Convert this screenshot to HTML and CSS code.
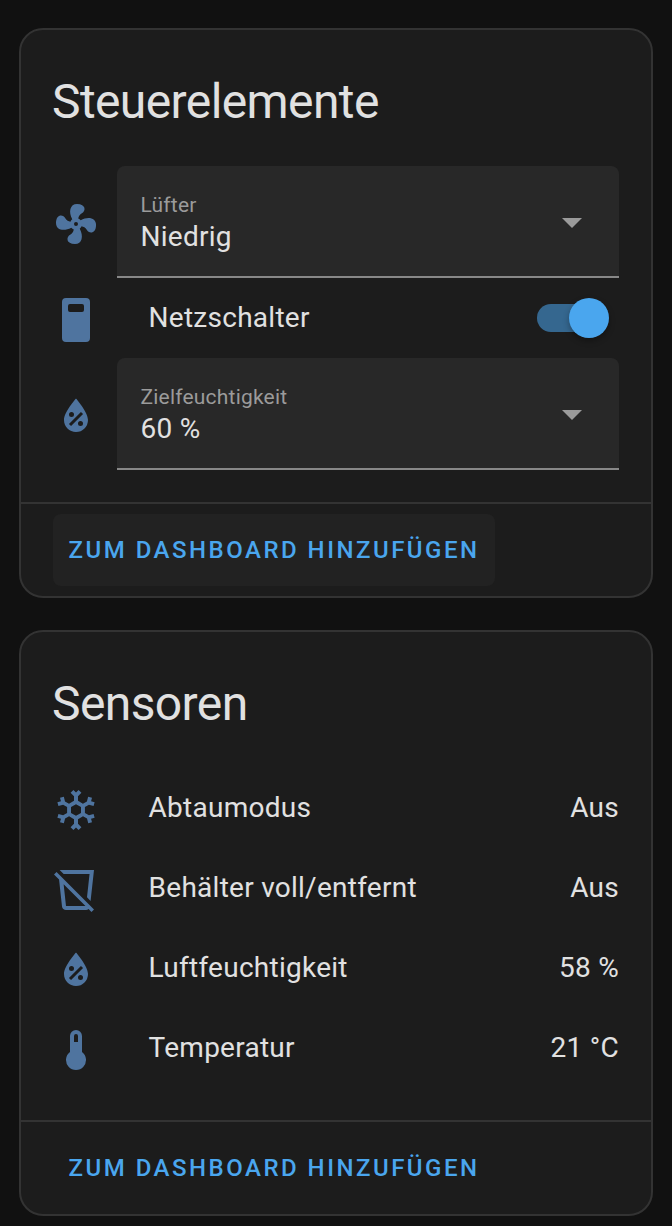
FILE: index.html
```html
<!DOCTYPE html>
<html lang="de">
<head>
<meta charset="utf-8">
<title>Luftentfeuchter</title>
<link rel="stylesheet" href="styles.css">
</head>
<body>
<main class="page">
  <section class="card">
    <h1 class="card-title">Steuerelemente</h1>
    <div class="rows">
      <div class="row row-select">
        <svg class="icon" viewBox="0 0 24 24"><path d="M12,11A1,1 0 0,0 11,12A1,1 0 0,0 12,13A1,1 0 0,0 13,12A1,1 0 0,0 12,11M12.5,2C17,2 17.11,5.57 14.75,6.75C13.76,7.24 13.32,8.29 13.13,9.22C13.61,9.42 14.03,9.73 14.35,10.13C18.05,8.13 22.03,8.92 22.03,12.5C22.03,17 18.46,17.1 17.28,14.73C16.78,13.74 15.72,13.3 14.79,13.11C14.59,13.59 14.28,14 13.88,14.34C15.87,18.03 15.08,22 11.5,22C7,22 6.91,18.42 9.27,17.24C10.25,16.75 10.69,15.71 10.89,14.79C10.4,14.59 9.97,14.27 9.65,13.87C5.96,15.85 2,15.07 2,11.5C2,7 5.56,6.89 6.74,9.26C7.24,10.25 8.29,10.68 9.22,10.87C9.41,10.39 9.73,9.97 10.14,9.65C8.15,5.96 8.94,2 12.5,2Z"/></svg>
        <div class="select">
          <div class="select-text">
            <span class="select-label">Lüfter</span>
            <span class="select-value">Niedrig</span>
          </div>
          <svg class="arrow" viewBox="0 0 20 10"><path d="M0 0H20L10 10Z"/></svg>
        </div>
      </div>
      <div class="row">
        <svg class="icon" viewBox="0 0 24 24"><path fill-rule="evenodd" d="M7 1H17A2 2 0 0 1 19 3V21A2 2 0 0 1 17 23H7A2 2 0 0 1 5 21V3A2 2 0 0 1 7 1ZM9 4A1 1 0 0 0 8 5V7A1 1 0 0 0 9 8H15A1 1 0 0 0 16 7V5A1 1 0 0 0 15 4Z"/></svg>
        <span class="name">Netzschalter</span>
        <div class="switch"><div class="thumb"></div></div>
      </div>
      <div class="row row-select">
        <svg class="icon" viewBox="0 0 24 24"><path d="M12,3.25C12,3.25 6,10 6,14C6,17.32 8.69,20 12,20A6,6 0 0,0 18,14C18,10 12,3.25 12,3.25M14.47,9.97L15.53,11.03L9.53,17.03L8.47,15.97M9.75,10A1.25,1.25 0 0,1 11,11.25A1.25,1.25 0 0,1 9.75,12.5A1.25,1.25 0 0,1 8.5,11.25A1.25,1.25 0 0,1 9.75,10M14.25,14.5A1.25,1.25 0 0,1 15.5,15.75A1.25,1.25 0 0,1 14.25,17A1.25,1.25 0 0,1 13,15.75A1.25,1.25 0 0,1 14.25,14.5Z"/></svg>
        <div class="select">
          <div class="select-text">
            <span class="select-label">Zielfeuchtigkeit</span>
            <span class="select-value">60 %</span>
          </div>
          <svg class="arrow" viewBox="0 0 20 10"><path d="M0 0H20L10 10Z"/></svg>
        </div>
      </div>
    </div>
    <div class="actions"><button class="button hovered">ZUM DASHBOARD HINZUFÜGEN</button></div>
  </section>

  <section class="card">
    <h1 class="card-title">Sensoren</h1>
    <div class="rows">
      <div class="row">
        <svg class="icon" viewBox="0 0 24 24"><path d="M20.79,13.95L18.46,14.57L16.46,13.44V10.56L18.46,9.43L20.79,10.05L21.31,8.12L19.54,7.65L20,5.88L18.07,5.36L17.45,7.69L15.45,8.82L13,7.38V5.12L14.71,3.41L13.29,2L12,3.29L10.71,2L9.29,3.41L11,5.12V7.38L8.5,8.82L6.5,7.69L5.92,5.36L4,5.88L4.47,7.65L2.7,8.12L3.22,10.05L5.55,9.43L7.55,10.56V13.45L5.55,14.58L3.22,13.96L2.7,15.89L4.47,16.36L4,18.12L5.93,18.64L6.55,16.31L8.55,15.18L11,16.62V18.88L9.29,20.59L10.71,22L12,20.71L13.29,22L14.7,20.59L13,18.88V16.62L15.5,15.17L17.5,16.3L18.12,18.63L20,18.12L19.53,16.35L21.3,15.88L20.79,13.95M9.5,10.56L12,9.11L14.5,10.56V13.44L12,14.89L9.5,13.44V10.56Z"/></svg>
        <span class="name">Abtaumodus</span>
        <span class="state">Aus</span>
      </div>
      <div class="row">
        <svg class="icon" viewBox="0 0 24 24"><path d="M1 4.27L2.28 3L21 21.72L19.73 23L18.27 21.54C17.93 21.83 17.5 22 17 22H7C5.97 22 5.13 21.23 5 20.23L3.53 6.8L1 4.27M7 20H16.73L5.82 9.09L7 20M18.77 4H5.82L3.82 2H21L19.29 17.47L17.5 15.68L18.77 4Z"/></svg>
        <span class="name">Behälter voll/entfernt</span>
        <span class="state">Aus</span>
      </div>
      <div class="row">
        <svg class="icon" viewBox="0 0 24 24"><path d="M12,3.25C12,3.25 6,10 6,14C6,17.32 8.69,20 12,20A6,6 0 0,0 18,14C18,10 12,3.25 12,3.25M14.47,9.97L15.53,11.03L9.53,17.03L8.47,15.97M9.75,10A1.25,1.25 0 0,1 11,11.25A1.25,1.25 0 0,1 9.75,12.5A1.25,1.25 0 0,1 8.5,11.25A1.25,1.25 0 0,1 9.75,10M14.25,14.5A1.25,1.25 0 0,1 15.5,15.75A1.25,1.25 0 0,1 14.25,17A1.25,1.25 0 0,1 13,15.75A1.25,1.25 0 0,1 14.25,14.5Z"/></svg>
        <span class="name">Luftfeuchtigkeit</span>
        <span class="state">58 %</span>
      </div>
      <div class="row">
        <svg class="icon" viewBox="0 0 24 24"><path d="M15 13V5A3 3 0 0 0 9 5V13A5 5 0 1 0 15 13M12 4A1 1 0 0 1 13 5V8H11V5A1 1 0 0 1 12 4Z"/></svg>
        <span class="name">Temperatur</span>
        <span class="state">21 °C</span>
      </div>
    </div>
    <div class="actions"><button class="button">ZUM DASHBOARD HINZUFÜGEN</button></div>
  </section>
</main>
</body>
</html>
```
FILE: styles.css
```css
* { box-sizing: border-box; }

body {
  margin: 0;
  background: #111111;
  color: #e1e1e1;
  font-family: Roboto, "Noto Sans", sans-serif;
}

.page {
  display: flex;
  flex-direction: column;
  gap: 32px;
  padding: 28px 19px 10px;
}

.card {
  background: #1c1c1c;
  border: 2px solid #333333;
  border-radius: 24px;
}

.card-title {
  margin: 0;
  height: 136px;
  padding: 24px 31px 16px;
  font-size: 48px;
  font-weight: 400;
  line-height: 96px;
  letter-spacing: -0.6px;
}

.rows { padding: 0 32px 32px 31px; }

.row {
  display: flex;
  align-items: center;
  height: 80px;
}

.row-select { height: 112px; }

.icon {
  flex: none;
  width: 48px;
  height: 48px;
  margin-top: 4px;
  fill: #4f749f;
}

.name {
  flex: 1;
  margin-left: 48.6px;
  font-size: 28px;
  line-height: 40px;
  letter-spacing: 0.26px;
}

.state {
  font-size: 28px;
  line-height: 40px;
  letter-spacing: 0.26px;
}

.select {
  display: flex;
  flex: 1;
  align-items: center;
  justify-content: space-between;
  height: 112px;
  margin-left: 17px;
  padding: 4px 37px 0 23.5px;
  background: #282828;
  border-bottom: 2px solid #888888;
  border-radius: 8px 8px 0 0;
}

.select-text {
  display: flex;
  flex-direction: column;
}

.select-label {
  color: #9b9b9b;
  font-size: 21px;
  line-height: 28px;
  letter-spacing: 0.2px;
}

.select-value {
  font-size: 28px;
  line-height: 36px;
  letter-spacing: 0.26px;
}

.arrow {
  width: 20px;
  height: 10px;
  fill: #9b9b9b;
}

.switch {
  display: flex;
  align-items: center;
  justify-content: flex-end;
  width: 72px;
  height: 28px;
  margin-right: 10px;
  background: linear-gradient(#35678f, #35678f) left / 64px 28px no-repeat;
  border-radius: 14px;
}

.thumb {
  flex: none;
  width: 40px;
  height: 40px;
  background: #4aa6ee;
  border-radius: 50%;
  box-shadow: 0 3px 6px rgba(0, 0, 0, 0.3);
}

.actions {
  height: 94px;
  padding: 10px 32px;
  border-top: 2px solid #333333;
}

.button {
  height: 72px;
  padding: 0 15.5px;
  background: none;
  border: 0;
  border-radius: 8px;
  color: #4aa6ee;
  font-family: inherit;
  font-size: 24px;
  font-weight: 500;
  letter-spacing: 2.5px;
  white-space: nowrap;
}

.hovered { background: #222222; }
```
